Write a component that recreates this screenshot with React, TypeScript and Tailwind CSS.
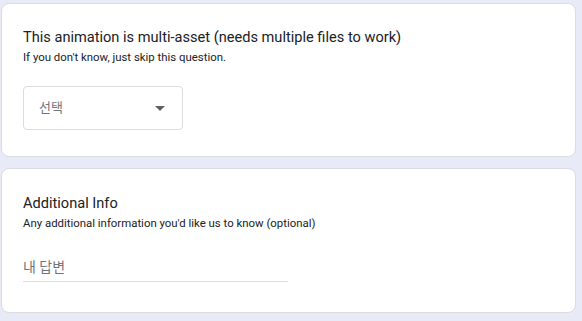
import React from "react";

export default function App() {
  return (
    <div
      className="w-[582px] h-[321px] bg-[#e8eaf7] overflow-hidden pt-[3px] pl-[1px]"
      style={{ fontFamily: "Roboto, 'Noto Sans CJK KR', sans-serif" }}
    >
      <div className="flex flex-col gap-[11px] w-[575px]">
        <div className="bg-white border border-[#dadce0] rounded-lg h-[154px] pl-[21px] pt-[23px]">
          <div className="text-[14.6px] leading-[20px] text-[#202124]">
            This animation is multi-asset (needs multiple files to work)
          </div>
          <div className="text-[11.4px] leading-[16px] text-[#202124] mt-[2px]">
            If you don't know, just skip this question.
          </div>
          <div className="mt-[21px] w-[160px] h-[44px] border border-[#dadce0] rounded flex items-center justify-between pl-[15px] pr-[17px]">
            <span className="text-[13px] text-[#70757a]">선택</span>
            <svg width="10" height="5" viewBox="0 0 10 5">
              <path d="M0 0 L10 0 L5 5 Z" fill="#5f6368" />
            </svg>
          </div>
        </div>
        <div className="bg-white border border-[#dadce0] rounded-lg h-[145px] pl-[21px] pt-[24px]">
          <div className="text-[14.6px] leading-[20px] text-[#202124]">Additional Info</div>
          <div className="text-[11.4px] leading-[16px] text-[#202124] mt-[2px]">
            Any additional information you'd like us to know (optional)
          </div>
          <div className="mt-[24px] w-[265px] border-b border-[#dadce0] pb-[2px]">
            <span className="text-[14px] text-[#70757a]">내 답변</span>
          </div>
        </div>
      </div>
    </div>
  );
}
